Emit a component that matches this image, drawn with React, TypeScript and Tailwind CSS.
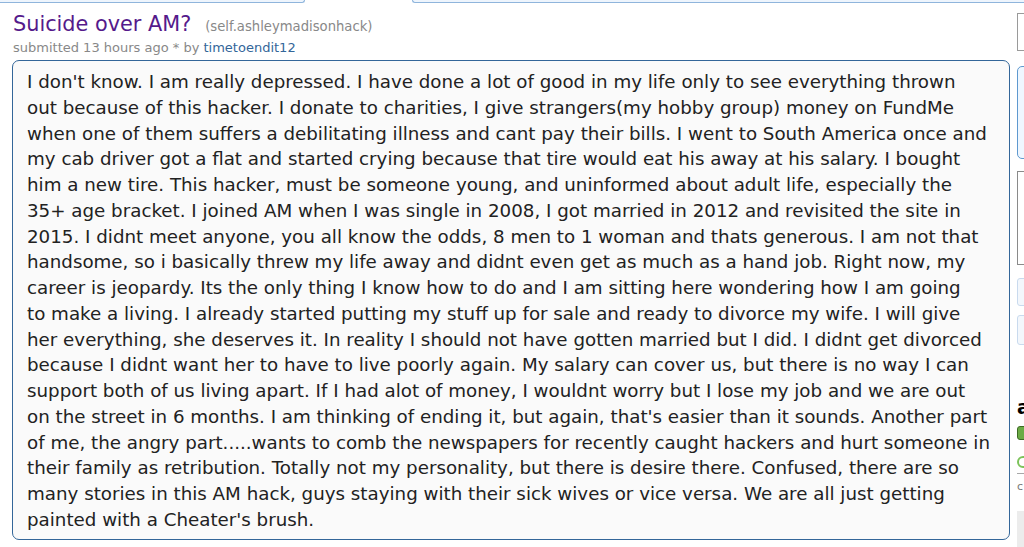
import React from 'react';

const bodyLines = [
  "I don't know. I am really depressed. I have done a lot of good in my life only to see everything thrown",
  'out because of this hacker. I donate to charities, I give strangers(my hobby group) money on FundMe',
  'when one of them suffers a debilitating illness and cant pay their bills. I went to South America once and',
  'my cab driver got a flat and started crying because that tire would eat his away at his salary. I bought',
  'him a new tire. This hacker, must be someone young, and uninformed about adult life, especially the',
  '35+ age bracket. I joined AM when I was single in 2008, I got married in 2012 and revisited the site in',
  '2015. I didnt meet anyone, you all know the odds, 8 men to 1 woman and thats generous. I am not that',
  'handsome, so i basically threw my life away and didnt even get as much as a hand job. Right now, my',
  'career is jeopardy. Its the only thing I know how to do and I am sitting here wondering how I am going',
  'to make a living. I already started putting my stuff up for sale and ready to divorce my wife. I will give',
  'her everything, she deserves it. In reality I should not have gotten married but I did. I didnt get divorced',
  'because I didnt want her to have to live poorly again. My salary can cover us, but there is no way I can',
  'support both of us living apart. If I had alot of money, I wouldnt worry but I lose my job and we are out',
  "on the street in 6 months. I am thinking of ending it, but again, that's easier than it sounds. Another part",
  'of me, the angry part.....wants to comb the newspapers for recently caught hackers and hurt someone in',
  'their family as retribution. Totally not my personality, but there is desire there. Confused, there are so',
  'many stories in this AM hack, guys staying with their sick wives or vice versa. We are all just getting',
  "painted with a Cheater's brush.",
];

const Sidebar: React.FC = () => (
  <div className="w-[7px] overflow-hidden shrink-0">
    <div className="w-[300px] flex flex-col">
      <div className="mt-[10px] h-[38px] border border-[#9a9a9a] bg-white" />
      <div className="mt-[15px] h-[93px] rounded-[5px] border border-[#5f99cf] bg-[#eff7ff]" />
      <div className="mt-[12px] h-[94px] border border-[#8a8a8a] bg-white" />
      <div className="mt-[13px] h-[28px] rounded-[3px] border border-[#c9daee] bg-[#f3f7fc]" />
      <div className="mt-[9px] h-[30px] rounded-[3px] border border-[#c9daee] bg-[#f3f7fc]" />
      <div className="mt-[52px] text-[19px] leading-[20px] font-bold text-black">about</div>
      <div className="mt-[9px] h-[14px] w-[80px] rounded-[3px] border border-[#3d6b23] bg-[#6cab45]" />
      <div className="mt-[16px] h-[12px] w-[12px] rounded-full border-2 border-[#7cc35a]" />
      <div className="mt-[5px] h-px bg-[#a8a8a8]" />
      <div className="mt-[7px] text-[11px] leading-[12px] text-[#777]">c</div>
      <div className="mt-[18px] h-[60px] bg-[#ececec]" />
    </div>
  </div>
);

export default function App() {
  return (
    <div
      className="w-[1024px] h-[547px] overflow-hidden bg-white"
      style={{ fontFamily: '"DejaVu Sans", Verdana, sans-serif' }}
    >
      {/* top link boxes */}
      <div className="flex h-[3px]">
        <div className="w-[305px] rounded-br-[3px] border-b border-r border-[#8fb5dc] bg-[#eef5fd]" />
        <div className="ml-[107px] flex-1 rounded-bl-[3px] border-b border-l border-[#8fb5dc] bg-[#eef5fd]" />
      </div>

      <div className="flex">
        <div className="w-[1010px] pl-[12px] shrink-0">
          <div className="mt-[9px] flex items-baseline leading-[24px] pl-px">
            <span className="text-[20.8px] text-[#551a8b]">Suicide over AM?</span>
            <span className="ml-[14px] text-[13.2px] text-[#888]">(self.ashleymadisonhack)</span>
          </div>
          <div className="mt-[1px] text-[13px] leading-[16px] text-[#888] pl-px">
            submitted 13 hours ago * by <span className="text-[#369]">timetoendit12</span>
          </div>

          <div className="mt-[4px] rounded-[7px] border border-[#369] bg-[#fafafa] pl-[14px] pt-[8px] pb-[6px] text-[18.25px] leading-[25.76px] text-[#222] whitespace-nowrap">
            {bodyLines.map((line, i) => (
              <div key={i}>{line}</div>
            ))}
          </div>
        </div>
        <div className="w-[7px] shrink-0" />
        <Sidebar />
      </div>
    </div>
  );
}
